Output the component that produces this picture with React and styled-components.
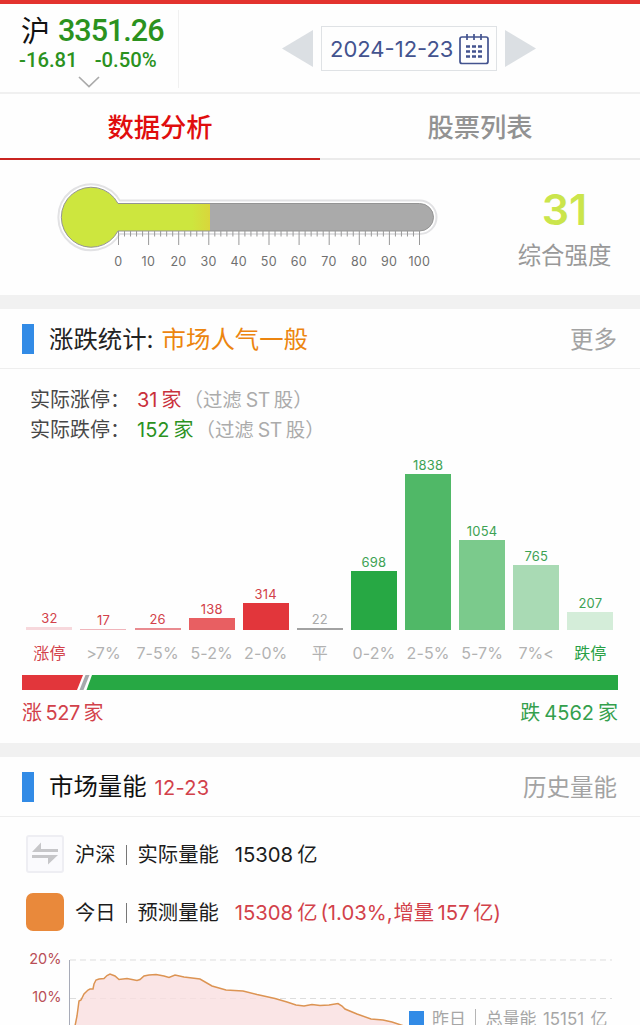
import React from "react";
import styled, { createGlobalStyle } from "styled-components";

const GlobalStyle = createGlobalStyle`
  * {
    box-sizing: border-box;
  }

  body {
    margin: 0;
    background: #fefefe;
    font-family: Inter, "Noto Sans CJK SC", sans-serif;
  }
`;

const Page = styled.div`
  width: 640px;
  height: 1025px;
  overflow: hidden;
  background: #fefefe;
  border-top: 4px solid #e3332e;
`;

const Num = styled.span`
  letter-spacing: ${({ $track }) => $track || "0"};
  margin: 0 ${({ $gap }) => $gap || "0"};
`;

const Header = styled.header`
  display: flex;
  height: 90px;
  border-bottom: 2px solid #f0f0f0;
`;

const IndexBox = styled.div`
  display: flex;
  flex-direction: column;
  width: 179px;
  height: 78px;
  margin-top: 6px;
  padding-left: 19px;
  border-right: 1px solid #f0f0f0;
  color: #2b921e;
  font-family: Roboto, "Noto Sans CJK SC", sans-serif;
`;

const IndexValue = styled.div`
  display: flex;
  gap: 9px;
  height: 39px;
  padding: 4px 0 0 2px;
  font-size: 30.5px;
  font-weight: 500;
  line-height: 34px;
  letter-spacing: -1px;
`;

const IndexName = styled.span`
  width: 28px;
  color: #111;
  font-size: 29px;
  font-weight: 400;
  line-height: 36px;
`;

const IndexChange = styled.div`
  display: flex;
  gap: 17px;
  font-size: 20.3px;
  font-weight: 500;
  line-height: 22px;
`;

const Chevron = styled.svg`
  display: block;
  width: 22px;
  height: 12px;
  margin: 5px 0 0 59px;
`;

const DatePicker = styled.div`
  display: flex;
  align-items: center;
  gap: 8px;
  height: 45px;
  margin: 22px 0 0 103px;
`;

const Arrow = styled.svg`
  width: 31px;
  height: 37px;
  fill: #dbdfe3;
`;

const DateField = styled.div`
  display: flex;
  align-items: center;
  justify-content: space-between;
  width: 176px;
  height: 45px;
  padding: 0 7px 0 8px;
  border: 1px solid #dfe2e5;
  color: #43538f;
  font-size: 22px;
  line-height: 30px;
`;

const Tabs = styled.nav`
  display: flex;
  height: 66px;
`;

const Tab = styled.div`
  flex: 1;
  border-bottom: 2px solid ${({ $active }) => ($active ? "#c92420" : "#ebebeb")};
  color: ${({ $active }) => ($active ? "#e00d0d" : "#929292")};
  font-size: 26.3px;
  font-weight: 500;
  line-height: 67px;
  text-align: center;
`;

const GaugeSection = styled.section`
  display: flex;
  height: 135px;
`;

const GaugeDrawing = styled.svg`
  flex: none;
  width: 489px;
  height: 135px;
`;

const Score = styled.div`
  flex: 1;
  padding-top: 22px;
  text-align: center;
`;

const ScoreValue = styled.div`
  height: 54px;
  color: #cbe54c;
  font-size: 43px;
  font-weight: 600;
  line-height: 54px;
`;

const ScoreLabel = styled.div`
  color: #999;
  font-size: 23.4px;
  line-height: 39px;
`;

const Band = styled.div`
  height: 14px;
  background: #f1f1f1;
`;

const SectionHeader = styled.div`
  display: flex;
  align-items: center;
  height: 60px;
  padding: 0 23px 0 22px;
  border-bottom: 1px solid #eee;
`;

const Marker = styled.i`
  width: 12px;
  height: 30px;
  margin-right: 15px;
  background: #328be6;
`;

const SectionTitle = styled.h2`
  margin: 0;
  color: ${({ $color }) => $color || "#222"};
  font-size: 24.4px;
  font-weight: 400;
  line-height: 40px;
`;

const Mood = styled.span`
  margin-left: 8px;
  color: #ec850f;
`;

const SectionDate = styled.span`
  margin-left: 8px;
  color: #d2414a;
  font-size: 20px;
  letter-spacing: 0.3px;
`;

const MoreLink = styled.a`
  margin-left: auto;
  padding-top: 2px;
  color: #a3a3a3;
  font-size: 23.5px;
  line-height: 40px;
`;

const LimitList = styled.div`
  height: 90px;
  padding: 16px 0 0 30px;
`;

const LimitRow = styled.div`
  display: flex;
  height: 30px;
  color: #484848;
  font-size: 20px;
  line-height: 31px;
`;

const LimitLabel = styled.span`
  width: 107px;
`;

const LimitCount = styled.span`
  color: ${({ $color }) => $color};
`;

const LimitNote = styled.span`
  margin-left: 2px;
  color: #ababab;
  font-size: 19.4px;
`;

const BarChart = styled.div`
  display: flex;
  gap: 8.1px;
  height: 216px;
  padding: 0 26.4px;
`;

const BarColumn = styled.div`
  display: flex;
  flex-direction: column;
  align-items: center;
  justify-content: flex-end;
  width: 46px;
`;

const BarValue = styled.span`
  color: ${({ $color }) => $color};
  font-size: 13px;
  line-height: 18px;
  letter-spacing: 0.2px;
`;

const Bar = styled.div`
  flex: none;
  width: 46px;
  background: ${({ $color }) => $color};
`;

const BarLabel = styled.span`
  height: 37px;
  margin-bottom: 8px;
  color: ${({ $color }) => $color || "#b2b2b2"};
  font-size: 16px;
  line-height: 46px;
  letter-spacing: 0.1px;
  white-space: nowrap;
`;

const RatioBar = styled.svg`
  display: block;
  width: 596px;
  height: 15px;
  margin: 0 22px;
`;

const RatioLabels = styled.div`
  display: flex;
  justify-content: space-between;
  height: 53px;
  padding: 3px 22px 0;
  font-size: 20px;
  line-height: 40px;
`;

const RatioText = styled.span`
  color: ${({ $color }) => $color};
`;

const VolumeRow = styled.div`
  display: flex;
  align-items: center;
  height: ${({ $height }) => $height};
  padding-left: 26px;
  color: #1c1c1c;
  font-size: 20.3px;
  line-height: 40px;
`;

const VolumeIcon = styled.div`
  width: 38px;
  height: 38px;
  margin: 0 11px 2px 0;
  border: 2px solid ${({ $today }) => ($today ? "#e9893b" : "#eeeef3")};
  border-radius: ${({ $today }) => ($today ? "7px" : "3px")};
  background: ${({ $today }) => ($today ? "#e9893b" : "#fafafd")};

  svg {
    display: block;
  }
`;

const Separator = styled.i`
  width: 1px;
  height: 20px;
  margin: 0 ${({ $gap }) => $gap || "11px"} 0 ${({ $gap }) => $gap || "10px"};
  background: ${({ $color }) => $color || "#777"};
`;

const VolumeValue = styled.span`
  margin-left: 16px;
  color: ${({ $color }) => $color};
`;

const TrendSection = styled.div`
  display: grid;
  height: 85px;
  margin-top: 7px;
`;

const TrendChart = styled.svg`
  grid-area: 1 / 1;
  width: 640px;
  height: 85px;
`;

const Legend = styled.div`
  display: flex;
  grid-area: 1 / 1;
  align-items: center;
  align-self: start;
  height: 18px;
  margin: 70px 0 0 409px;
  color: #a6a6a6;
  font-size: 16.9px;
  line-height: 18px;
`;

const LegendMark = styled.i`
  width: 15px;
  height: 16px;
  margin-right: 8px;
  background: #328be6;
`;

const RED = "#d2414a";
const GREEN = "#3da253";

const distribution = [
  { label: "涨停", count: 32, bar: "#f7d8dc", text: RED, labelColor: RED },
  { label: ">7%", count: 17, bar: "#f0b5bb", text: RED },
  { label: "7-5%", count: 26, bar: "#e98b90", text: RED },
  { label: "5-2%", count: 138, bar: "#e85f62", text: RED },
  { label: "2-0%", count: 314, bar: "#e2363b", text: RED },
  { label: "平", count: 22, bar: "#a2a2a2", text: "#aaa" },
  { label: "0-2%", count: 698, bar: "#27a844", text: GREEN },
  { label: "2-5%", count: 1838, bar: "#50b867", text: GREEN },
  { label: "5-7%", count: 1054, bar: "#7bca8c", text: GREEN },
  { label: "7%<", count: 765, bar: "#a9dab4", text: GREEN },
  { label: "跌停", count: 207, bar: "#d4edd9", text: GREEN, labelColor: "#27a044" },
];

const Gauge = () => {
  const ticks = Array.from({ length: 51 }, (_, i) => i * 2);
  const outline =
    "M118 43.5 H419.5 A14 13.75 0 0 1 419.5 71 H118 A30 30 0 1 1 118 43.5 Z";

  return (
    <GaugeDrawing viewBox="0 0 489 135">
      <defs>
        <linearGradient id="level" x1="0" x2="1">
          <stop offset="0.88" stopColor="#cde63e" />
          <stop offset="1" stopColor="#d9d63b" />
        </linearGradient>
        <clipPath id="tube">
          <path d={outline} />
        </clipPath>
      </defs>
      <path d={outline} fill="none" stroke="#e2e2e4" strokeWidth="8" />
      <path d={outline} fill="none" stroke="#fff" strokeWidth="4" />
      <g clipPath="url(#tube)">
        <rect x="200" y="42" width="240" height="30" fill="#aaa" />
        <rect x="60" y="20" width="150" height="70" fill="url(#level)" />
      </g>
      <path d={outline} fill="none" stroke="#949494" />
      {ticks.map((t) => (
        <line
          key={t}
          x1={118.5 + t * 3.01}
          x2={118.5 + t * 3.01}
          y1="71"
          y2={t % 10 === 0 ? 85 : 76.5}
          stroke="#999"
        />
      ))}
      {ticks
        .filter((t) => t % 10 === 0)
        .map((t) => (
          <text
            key={t}
            x={118.3 + t * 3.01}
            y="105.5"
            fill="#707070"
            fontSize="12.5"
            letterSpacing="0.3"
            textAnchor="middle"
          >
            {t}
          </text>
        ))}
    </GaugeDrawing>
  );
};

const CalendarIcon = () => (
  <svg width="30" height="32" viewBox="0 0 30 32" fill="none" stroke="#43538f">
    <rect x="1" y="4" width="28" height="26.5" rx="2" strokeWidth="1.7" />
    <path d="M8 1v6M15 1v6M22 1v6" strokeWidth="1.7" />
    <path
      d="M7 13.5h4M13 13.5h4M19 13.5h4M7 18.5h4M13 18.5h4M19 18.5h4M7 23.5h4M13 23.5h4M19 23.5h4"
      strokeWidth="2.7"
    />
  </svg>
);

const trendLine =
  "M75 86 L77 76 L79 61 L81 60 L84 54 L88 50 L90 49 L93 49 L94 44 L96 40 L99 39 L104 38.5 L107 35.5 L110 34 L115 36 L119 39.5 L127 38.5 L137 40.5 L140 39.5 L144 36 L149 35 L156 34.5 L164 36 L169 37.5 L175 35 L184 37 L200 39 L212 46 L226 50 L243 51 L257 54.5 L275 58.5 L287 62 L296 65 L304 66 L312 64.5 L320 65.5 L329 65 L338 63.5 L342 66 L345 69 L357 74 L371 79 L383 80 L392 82 L404 86";

const App = () => {
  return (
    <>
      <GlobalStyle />
      <Page>
        <Header>
          <IndexBox>
            <IndexValue>
              <IndexName>沪</IndexName>
              <span>3351.26</span>
            </IndexValue>
            <IndexChange>
              <span>-16.81</span>
              <span>-0.50%</span>
            </IndexChange>
            <Chevron viewBox="0 0 22 12" fill="none" stroke="#aaa" strokeWidth="1.7">
              <path d="M1 1l10 9.5L21 1" />
            </Chevron>
          </IndexBox>
          <DatePicker>
            <Arrow viewBox="0 0 31 37">
              <path d="M31 0v37L0 18.5z" />
            </Arrow>
            <DateField>
              <Num>2024-12-23</Num>
              <CalendarIcon />
            </DateField>
            <Arrow viewBox="0 0 31 37">
              <path d="M0 0v37l31-18.5z" />
            </Arrow>
          </DatePicker>
        </Header>

        <Tabs>
          <Tab $active>数据分析</Tab>
          <Tab>股票列表</Tab>
        </Tabs>

        <GaugeSection>
          <Gauge />
          <Score>
            <ScoreValue>31</ScoreValue>
            <ScoreLabel>综合强度</ScoreLabel>
          </Score>
        </GaugeSection>

        <Band />
        <SectionHeader>
          <Marker />
          <SectionTitle>
            涨跌统计:<Mood>市场人气一般</Mood>
          </SectionTitle>
          <MoreLink>更多</MoreLink>
        </SectionHeader>

        <LimitList>
          <LimitRow>
            <LimitLabel>实际涨停：</LimitLabel>
            <LimitCount $color="#c9303b">
              31<Num $gap="2px" />家
            </LimitCount>
            <LimitNote>
              （过滤<Num $gap="4px" $track="-0.4px">ST</Num>股）
            </LimitNote>
          </LimitRow>
          <LimitRow>
            <LimitLabel>实际跌停：</LimitLabel>
            <LimitCount $color="#2b921e">
              152<Num $gap="2px" />家
            </LimitCount>
            <LimitNote>
              （过滤<Num $gap="4px" $track="-0.4px">ST</Num>股）
            </LimitNote>
          </LimitRow>
        </LimitList>

        <BarChart>
          {distribution.map((item) => (
            <BarColumn key={item.label}>
              <BarValue $color={item.text}>{item.count}</BarValue>
              <Bar
                $color={item.bar}
                style={{ height: Math.max(1.5, item.count * 0.085) }}
              />
              <BarLabel $color={item.labelColor}>{item.label}</BarLabel>
            </BarColumn>
          ))}
        </BarChart>
        <RatioBar viewBox="0 0 596 15">
          <path d="M0 0H61L55 15H0z" fill="#e2363b" />
          <path d="M63.5 0h4L61.5 15h-4z" fill="#a5a9ac" />
          <path d="M70 0H596V15H64.5z" fill="#27a844" />
        </RatioBar>
        <RatioLabels>
          <RatioText $color={RED}>
            涨<Num $gap="3.5px" $track="-0.4px">527</Num>家
          </RatioText>
          <RatioText $color="#34a04d">
            跌<Num $gap="4px">4562</Num>家
          </RatioText>
        </RatioLabels>

        <Band />
        <SectionHeader>
          <Marker />
          <SectionTitle $color="#111">
            市场量能<SectionDate>12-23</SectionDate>
          </SectionTitle>
          <MoreLink>历史量能</MoreLink>
        </SectionHeader>

        <VolumeRow $height="76px">
          <VolumeIcon>
            <svg width="34" height="34" viewBox="0 0 34 34" fill="#c6c6c9">
              <path d="M13 5.5V12H30V15H4z" />
              <path d="M4 18H30L20 27.5V21H4z" />
            </svg>
          </VolumeIcon>
          沪深
          <Separator />
          实际量能
          <VolumeValue $color="#1c1c1c">
            15308<Num $gap="2px" />亿
          </VolumeValue>
        </VolumeRow>
        <VolumeRow $height="40px">
          <VolumeIcon $today />
          今日
          <Separator />
          预测量能
          <VolumeValue $color={RED}>
            15308<Num $gap="2px" />亿<Num $gap="1.5px" />(1.03%,
            <Num $gap="0.5px" />增量<Num $gap="3.5px">157</Num>亿)
          </VolumeValue>
        </VolumeRow>

        <TrendSection>
          <TrendChart viewBox="0 0 640 85">
            <path d="M70 20H612M70 58.5H612" stroke="#ddd" strokeDasharray="6 4" />
            <path d={`${trendLine} Z`} fill="#f9dfe0" fillOpacity="0.8" />
            <path d={trendLine} fill="none" stroke="#dc9453" strokeWidth="1.5" />
            <path d="M69.5 20V86" stroke="#a7abb8" />
            <g fill="#b94f56" fontSize="14.5" textAnchor="end">
              <text x="61.5" y="24">20%</text>
              <text x="61.5" y="62">10%</text>
            </g>
          </TrendChart>
          <Legend>
            <LegendMark />
            昨日
            <Separator $gap="9.5px" $color="#b5b5b5" />
            总量能
            <Num $gap="6.5px">15151</Num>亿
          </Legend>
        </TrendSection>
      </Page>
    </>
  );
};

export default App;
